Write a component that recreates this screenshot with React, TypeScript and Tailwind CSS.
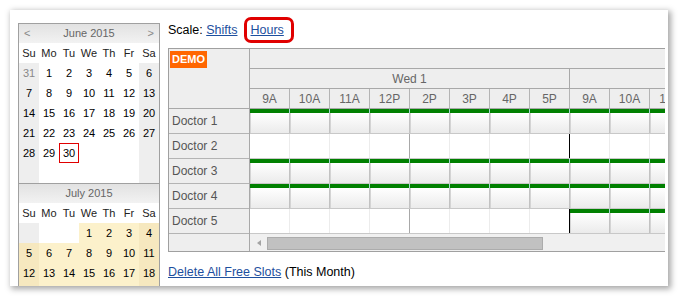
import React from "react";

type Day = number | null;

const dayNames = ["Su", "Mo", "Tu", "We", "Th", "Fr", "Sa"];

const june: Day[][] = [
  [31, 1, 2, 3, 4, 5, 6],
  [7, 8, 9, 10, 11, 12, 13],
  [14, 15, 16, 17, 18, 19, 20],
  [21, 22, 23, 24, 25, 26, 27],
  [28, 29, 30, null, null, null, null],
  [null, null, null, null, null, null, null],
];

// only the weeks that show above the panel's bottom edge
const july: Day[][] = [
  [null, null, null, 1, 2, 3, 4],
  [5, 6, 7, 8, 9, 10, 11],
  [12, 13, 14, 15, 16, 17, 18],
];

const hours = ["9A", "10A", "11A", "12P", "2P", "3P", "4P", "5P", "9A", "10A", "11A"];

// which columns hold a free slot, per doctor
const doctors = [
  { name: "Doctor 1", from: 0 },
  { name: "Doctor 2", from: -1 },
  { name: "Doctor 3", from: 0 },
  { name: "Doctor 4", from: 0 },
  { name: "Doctor 5", from: 8 },
];

function Month({ title, weeks, arrows, selected }: { title: string; weeks: Day[][]; arrows?: boolean; selected?: boolean }) {
  return (
    <div>
      <div className="h-[19px] flex items-center justify-between px-[5px] bg-gradient-to-b from-[#e2e2e2] to-[#f2f2f2] text-[11px] text-[#666]">
        <span className="w-[8px] text-[#888]">{arrows ? "<" : ""}</span>
        <span>{title}</span>
        <span className="w-[8px] text-[#888] text-right">{arrows ? ">" : ""}</span>
      </div>
      <div className="grid grid-cols-7 h-[20px] bg-white text-[11px] text-[#222]">
        {dayNames.map((n) => (
          <div key={n} className="flex items-center justify-center">
            {n}
          </div>
        ))}
      </div>
      {weeks.map((week, wi) => (
        <div key={wi} className="grid grid-cols-7 h-[20px] text-[11px]">
          {week.map((d, i) => {
            const weekend = i === 0 || i === 6;
            const prev = wi === 0 && d !== null && d > 20;
            const sel = selected && d !== null;
            let bg = weekend ? "bg-[#eeeeee]" : "bg-white";
            if (sel) bg = weekend ? "bg-[#f6e8bf]" : "bg-[#fcf1cb]";
            const today = !selected && d === 30;
            return (
              <div
                key={i}
                className={`${bg} flex items-center justify-center ${prev ? "text-[#888]" : "text-black"} ${
                  today ? "border border-[#e00000]" : ""
                }`}
              >
                {d ?? ""}
              </div>
            );
          })}
        </div>
      ))}
      {selected && (
        <div className="grid grid-cols-7 h-[20px]">
          {dayNames.map((n, i) => (
            <div key={n} className={i === 0 || i === 6 ? "bg-[#f6e8bf]" : "bg-[#fcf1cb]"} />
          ))}
        </div>
      )}
    </div>
  );
}

function SlotRow({ from }: { from: number }) {
  return (
    <div className="flex h-[25px] border-b border-[#c8c8c8]">
      {hours.map((h, i) => {
        if (from >= 0 && i >= from) {
          return (
            <div key={i} className="w-[40px] shrink-0 flex flex-col">
              <div className="flex h-[4px]">
                <div className="w-[39px] bg-[#008000]" />
                <div className="w-[1px] bg-[#a6d8d4]" />
              </div>
              <div className="flex-1 border-l border-r border-l-[#d4d4d4] border-r-[#c2c2c2] bg-gradient-to-b from-white to-[#ebebeb]" />
            </div>
          );
        }
        let line = "border-[#ececec]";
        if (i === 3) line = "border-[#a8a8a8]";
        if (i === 7) line = "border-black";
        return <div key={i} className={`w-[40px] shrink-0 bg-white border-r ${line}`} />;
      })}
    </div>
  );
}

function Scheduler() {
  return (
    <div className="w-[497px] h-[204px] border-l border-t border-b border-[#a0a0a0] overflow-hidden flex text-[12px]">
      <div className="w-[81px] shrink-0 border-r border-[#a8a8a8] bg-[#eeeeee] flex flex-col">
        <div className="h-[60px] border-b border-[#a8a8a8] pl-[1px] pt-[1px]">
          <span className="inline-block bg-[#ff6600] text-white font-bold text-[11px] leading-[17px] px-[2px]">DEMO</span>
        </div>
        {doctors.map((d) => (
          <div key={d.name} className="h-[25px] border-b border-[#b4b4b4] flex items-center pl-[3px] text-[#555]">
            {d.name}
          </div>
        ))}
        <div className="flex-1" />
      </div>
      <div className="flex flex-col">
        <div className="h-[20px] w-[440px] border-b border-[#a8a8a8] bg-[#eeeeee]" />
        <div className="h-[20px] flex border-b border-[#a8a8a8] bg-[#eeeeee] text-[#666]">
          <div className="w-[320px] shrink-0 border-r border-[#a8a8a8] flex items-center justify-center">Wed 1</div>
          <div className="w-[120px] shrink-0" />
        </div>
        <div className="h-[20px] flex border-b border-[#a8a8a8] bg-[#eeeeee] text-[#666]">
          {hours.map((h, i) => (
            <div key={i} className="w-[40px] shrink-0 border-r border-[#b4b4b4] flex items-center justify-center">
              {h}
            </div>
          ))}
        </div>
        {doctors.map((d) => (
          <SlotRow key={d.name} from={d.from} />
        ))}
        <div className="h-[17px] bg-[#f0f0f0] flex items-start">
          <div className="w-[17px] h-[17px] flex items-center justify-center">
            <div className="w-0 h-0 border-y-[3px] border-y-transparent border-r-[4px] border-r-[#a3a3a3] ml-[1px]" />
          </div>
          <div className="mt-[3px] w-[276px] h-[13px] bg-[#c1c1c1] border border-[#acacac]" />
        </div>
      </div>
    </div>
  );
}

export default function App() {
  return (
    <div className="w-[680px] h-[298px] bg-white pt-[10px] pl-[10px] font-['Liberation_Sans',Arial,sans-serif]">
      <div className="w-[658px] h-[276px] bg-white flex overflow-hidden shadow-[2px_2px_6px_1px_rgba(0,0,0,0.35)]">
        <div className="ml-[8px] mt-[13px] w-[142px] shrink-0 self-start border border-[#a0a0a0]">
          <Month title="June 2015" weeks={june} arrows />
          <div className="border-t border-[#a0a0a0]">
            <Month title="July 2015" weeks={july} selected />
          </div>
        </div>
        <div className="ml-[8px] flex flex-col">
          <div className="mt-[7px] h-[26px] flex items-center text-[12.5px] text-black">
            <span>Scale:&nbsp;</span>
            <a href="#" className="text-[#1d4f9e] underline">Shifts</a>
            <span className="ml-[7px] h-[26px] flex items-center border-[3px] border-[#e00000] rounded-[7px] pl-[3px] pr-[7px]">
              <a href="#" className="text-[#1d4f9e] underline">Hours</a>
            </span>
          </div>
          <div className="mt-[5px]">
            <Scheduler />
          </div>
          <div className="mt-[12px] leading-[16px] text-[12.5px] text-black">
            <a href="#" className="text-[#1d4f9e] underline">Delete All Free Slots</a> (This Month)
          </div>
        </div>
      </div>
    </div>
  );
}
